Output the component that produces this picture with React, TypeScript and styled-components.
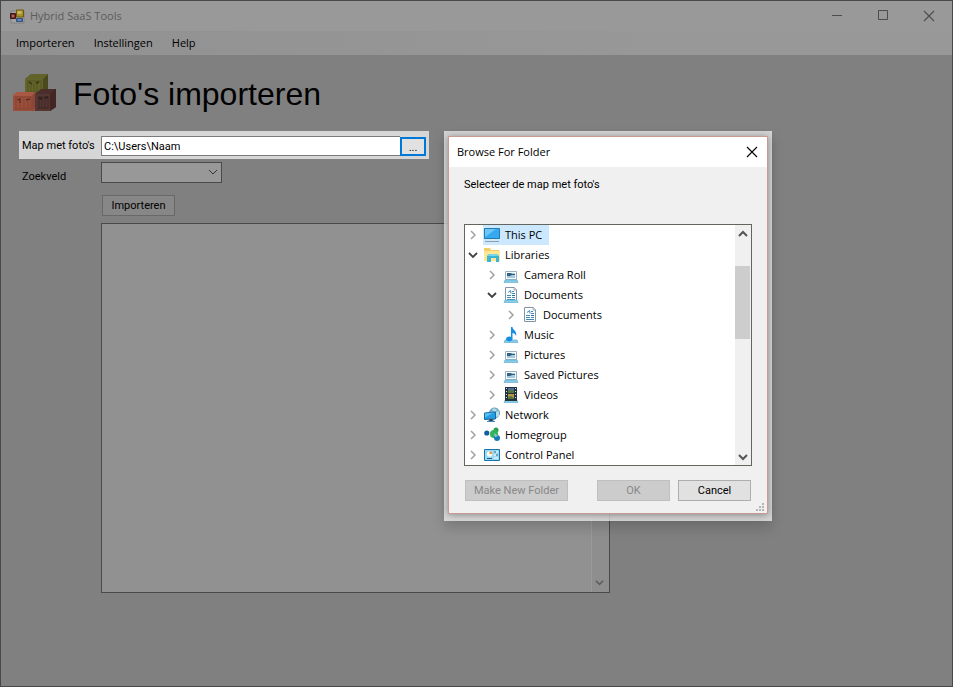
import React from 'react';
import styled, { createGlobalStyle } from 'styled-components';

const UI = '"Open Sans", "Noto Sans", sans-serif';
const CLASSIC = '"Liberation Sans", Arial, sans-serif';
const DIALOG = 'Roboto, "Liberation Sans", sans-serif';

const GlobalStyle = createGlobalStyle`
  *, *::before, *::after { box-sizing: border-box; }
  html, body { margin: 0; padding: 0; background: #808080; }
  body { font-family: ${UI}; font-size: 11px; color: #000; }
  button, input, select, textarea { font: inherit; color: inherit; margin: 0; }
`;

const AppWindow = styled.div`
  position: relative;
  display: flex;
  flex-direction: column;
  min-height: 100vh;
  border: 1px solid #484848;
  background: #808080;
`;

const TitleBar = styled.header`
  display: flex;
  align-items: center;
  height: 30px;
  padding-left: 9px;
  background: #999;
`;

const WindowTitle = styled.span`
  flex: 1;
  padding-left: 5px;
  line-height: 16px;
  color: #5c5c5c;
`;

const CaptionButton = styled.button`
  display: flex;
  align-items: center;
  justify-content: center;
  width: 46px;
  height: 30px;
  padding: 0;
  border: 0;
  background: transparent;
  color: #4c4c4c;
`;

const MenuBar = styled.nav`
  display: flex;
  height: 24px;
  padding-left: 10px;
  gap: 9px;
  background: linear-gradient(90deg, #919191, #989898 70%);
`;

const MenuButton = styled.button`
  padding: 0 5px;
  border: 0;
  background: transparent;
  line-height: 22px;
`;

const Content = styled.main`
  flex: 1;
  padding: 16px 18px 0;
`;

const Heading = styled.div`
  display: flex;
  align-items: center;
  gap: 15px;
  height: 46px;
  margin-left: -7px;
`;

const PageTitle = styled.h1`
  margin: 0;
  font: 400 32px/40px ${CLASSIC};
`;

const Form = styled.form`
  display: flex;
  flex-direction: column;
  max-width: 591px;
  margin-top: 14px;
  font-family: ${DIALOG};
`;

const FolderRow = styled.div`
  display: flex;
  align-items: center;
  width: 410px;
  max-width: 100%;
  height: 28px;
  padding: 2px 3px 0;
  background: #d6d6d6;
`;

const FieldRow = styled.div`
  display: flex;
  align-items: center;
  height: 22px;
  margin-top: 2px;
  padding-left: 3px;
`;

const Label = styled.label<{ $low?: boolean }>`
  flex: 0 0 79px;
  padding-top: ${(p) => (p.$low ? '10px' : '0')};
  line-height: 16px;
`;

const PathInput = styled.input`
  flex: 1;
  min-width: 0;
  height: 20px;
  padding: 0 2px;
  border: 1px solid #7a7a7a;
  border-right: 0;
  border-radius: 0;
  background: #fff;
  outline: 0;
`;

const BrowseButton = styled.button`
  width: 26px;
  height: 19px;
  padding: 2px 0 0;
  border: 2px solid #0078d7;
  background: #e1e1e1;
  line-height: 13px;
`;

const SelectBox = styled.div`
  display: grid;
  width: 121px;
  align-items: center;
  > * { grid-area: 1 / 1; }
  > svg { justify-self: end; margin-right: 4px; pointer-events: none; }
`;

const FieldSelect = styled.select`
  width: 100%;
  height: 21px;
  border: 1px solid #4a4a4a;
  border-radius: 0;
  background: #989898;
  appearance: none;
`;

const ImportButton = styled.button`
  width: 73px;
  height: 21px;
  margin: 12px 0 0 83px;
  padding: 0;
  border: 1px solid #686868;
  background: #878787;
`;

const LogPanel = styled.div`
  display: flex;
  height: 370px;
  margin: 7px 0 0 82px;
  border: 1px solid #4a4a4a;
  background: #919191;
`;

const LogText = styled.textarea`
  flex: 1;
  border: 0;
  padding: 2px;
  resize: none;
  overflow: hidden;
  background: transparent;
  outline: 0;
`;

const LogScroll = styled.div`
  display: flex;
  flex-direction: column;
  justify-content: flex-end;
  align-items: center;
  width: 18px;
  padding: 0 2px 5px 0;
  border-left: 1px solid #9b9b9b;
  background: #8e8e8e;
`;

const DialogHalo = styled.div`
  position: absolute;
  left: 443px;
  top: 130px;
  width: 328px;
  padding: 5px 4px 7px;
  background: rgba(235, 235, 235, 0.78);
  box-shadow: 0 7px 12px rgba(0, 0, 0, 0.16);
`;

const DialogBox = styled.section`
  border: 1px solid #c99a90;
  background: #f0f0f0;
  box-shadow: 0 1px 7px rgba(0, 0, 0, 0.36);
`;

const DialogTitleBar = styled.header`
  display: flex;
  align-items: center;
  justify-content: space-between;
  height: 30px;
  padding-left: 8px;
  background: #fff;
`;

const DialogTitle = styled.h2`
  margin: 0;
  font: 400 11px/16px ${UI};
`;

const CloseButton = styled.button`
  display: flex;
  align-items: center;
  justify-content: center;
  width: 31px;
  height: 30px;
  padding: 0;
  border: 0;
  background: transparent;
`;

const DialogBody = styled.div`
  padding: 10px 15px 0;
`;

const Prompt = styled.p`
  margin: 0;
  padding-bottom: 31px;
  font: 11px/16px ${DIALOG};
`;

const TreePanel = styled.div`
  display: flex;
  height: 242px;
  border: 1px solid #62665f;
  background: #fff;
`;

const Tree = styled.ul`
  flex: 1;
  margin: 0;
  padding: 0;
  list-style: none;
`;

const TreeRow = styled.li<{ $depth: number }>`
  display: flex;
  align-items: center;
  height: 20px;
  padding-left: ${(p) => p.$depth * 19 + 1}px;
`;

const Toggle = styled.button`
  display: flex;
  align-items: center;
  justify-content: center;
  width: 14px;
  height: 20px;
  padding: 0;
  border: 0;
  background: transparent;
`;

const NodeLabel = styled.span<{ $selected?: boolean }>`
  display: flex;
  align-items: center;
  gap: 5px;
  height: 20px;
  margin-left: 3px;
  padding: 0 7px 0 1px;
  line-height: 18px;
  background: ${(p) => (p.$selected ? '#cce8ff' : 'transparent')};
`;

const Scrollbar = styled.div`
  display: flex;
  flex-direction: column;
  width: 16px;
  background: #f0f0f0;
`;

const ScrollArrow = styled.button`
  display: flex;
  align-items: center;
  justify-content: center;
  height: 17px;
  padding: 0;
  border: 0;
  background: transparent;
`;

const ScrollTrack = styled.div`
  flex: 1;
  padding-top: 24px;
`;

const ScrollThumb = styled.div`
  width: 15px;
  height: 73px;
  background: #cdcdcd;
`;

const DialogFooter = styled.footer`
  display: flex;
  gap: 8px;
  margin: 14px 1px 0;
`;

const DialogButton = styled.button<{ $wide?: boolean }>`
  width: ${(p) => (p.$wide ? '103px' : '73px')};
  height: 21px;
  margin-right: ${(p) => (p.$wide ? 'auto' : '0')};
  padding: 0;
  border: 1px solid #adadad;
  background: #e1e1e1;
  font: 11px/18px ${DIALOG};
  &:disabled { border-color: #bfbfbf; background: #ccc; color: #888; }
`;

const GripRow = styled.div`
  display: flex;
  justify-content: flex-end;
  height: 12px;
  padding: 2px 2px 0 0;
`;

const Chevron = ({ dir, color = '#555', size = 10, weight = 2 }: {
  dir: 'up' | 'down' | 'right'; color?: string; size?: number; weight?: number;
}) => {
  const d = { up: 'M1 7l4-4 4 4', down: 'M1 3l4 4 4-4', right: 'M3 1l4 4-4 4' }[dir];
  return (
    <svg width={size} height={size} viewBox="0 0 10 10" fill="none" stroke={color} strokeWidth={weight} aria-hidden="true">
      <path d={d} />
    </svg>
  );
};

const Cross = ({ size = 12 }: { size?: number }) => (
  <svg width={size} height={size} viewBox="0 0 12 12" fill="none" stroke="currentColor" strokeWidth="1.1" aria-hidden="true">
    <path d="M1 1l10 10M11 1L1 11" />
  </svg>
);

const AppIcon = () => (
  <svg width="15" height="15" viewBox="0 0 15 15" aria-hidden="true">
    <path d="M1 2h13v12H1z" fill="#a3a3a3" stroke="#777" strokeWidth=".7" />
    <path d="M.5 4.500h5v5h-5z" fill="#7d2a22" stroke="#3b1715" />
    <path d="M2 6h2v2H2z" fill="#b76a60" />
    <path d="M6.500 1h7v7h-7z" fill="#a98f28" stroke="#6c5a12" />
    <path d="M7.500 2h4v3h-4z" fill="#c8b860" />
    <path d="M6.500 9.500h6v3h-6z" fill="#4870ad" stroke="#35507e" />
    <path d="M8 10.500h3v1H8z" fill="#7fa0cd" />
  </svg>
);

const CratesIcon = () => (
  <svg width="46" height="42" viewBox="0 0 46 42" aria-hidden="true">
    <path d="M13 6l6-5h17v15l-5 4H13z" fill="#5a5a1e" />
    <path d="M31 6l5-5v15l-5 5z" fill="#484a1d" />
    <path d="M13 6l6-5h17l-5 5z" fill="#62632a" />
    <path d="M13 6h18v15H13z" fill="#64642a" />
    <path d="M15 8h14M15 19h14M16 8v11M19 10v8M22 10v8M25 10v8M29 7v13" stroke="#53541f" />
    <path d="M17 9l3 2M24 10l3-1" stroke="#2f3217" strokeWidth="1.5" />
    <path d="M23 21l6-5h15v18l-6 4H23z" fill="#492e2b" />
    <path d="M38 21l6-5v18l-6 4z" fill="#432624" />
    <path d="M23 21h15v17H23z" fill="#533632" />
    <path d="M26 24h10M26 35h10M27 24v12M30 24v12M33 24v12M36 23v13" stroke="#402725" />
    <path d="M27 25l3 1M33 25l3-1" stroke="#2a1c1b" strokeWidth="1.5" />
    <path d="M1 22l5-3h16l1 3v16H1z" fill="#9b4e3c" />
    <path d="M1 22l5-3h17l-3 4H1z" fill="#a85843" />
    <path d="M20 23l3-4v15l-3 4z" fill="#8d4537" />
    <path d="M3 24h16M3 36h16M4 24v12M8 26v10M12 26v10M16 26v10M19 23v14" stroke="#87432f" />
    <path d="M5 27l3-1v4M14 27l4-1" fill="none" stroke="#5b2d23" strokeWidth="1.3" />
  </svg>
);

type IconKind = 'pc' | 'libraries' | 'picture' | 'document' | 'plainDocument' | 'music' | 'video' | 'network' | 'homegroup' | 'control';

const Tray = () => <path d="M2 13h12l1 2.500H1z" fill="#85cdea" stroke="#5aa8cb" strokeWidth=".6" />;

const Page = () => (
  <>
    <path d="M2.500 .5h9l2 2v12h-11z" fill="#fbfdff" stroke="#8297a3" />
    <path d="M11 0v3h3" fill="#dce5ea" stroke="#8297a3" strokeWidth=".7" />
    <path d="M5 5.500l2.500-2 .5 3M9 4.500h2M9 6.500h3M4 8.500h4M4 10.500h4M4 12.500h8M9 10.500h3" fill="none" stroke="#4288b3" />
    <path d="M9 8h3v1H9z" fill="#2f6c93" />
  </>
);

const NodeIcon = ({ kind }: { kind: IconKind }) => (
  <svg width="16" height="16" viewBox="0 0 16 16" aria-hidden="true">
    {kind === 'pc' && (
      <>
        <path d="M.5 1.500h15v10H.5z" fill="#35aaf0" stroke="#257aa9" />
        <path d="M1 2h11L1 10z" fill="#6cc8fb" />
        <path d="M6 12h4v1.500H6z" fill="#dbe9f2" />
        <path d="M1 14.500h14" stroke="#8b9faf" />
      </>
    )}
    {kind === 'libraries' && (
      <>
        <path d="M0 1h6l1 2h8v11H0z" fill="#f3ce65" />
        <path d="M0 4h16v10H0z" fill="#ffe694" />
        <path d="M3 15V9l2-2h8l2 2v6h-3v-4H7v4z" fill="#37b6d6" />
        <path d="M3 9l2-2h8l2 2z" fill="#76d7e8" />
      </>
    )}
    {kind === 'picture' && (
      <>
        <path d="M2.500 4.500h11v8h-11z" fill="#f6fbfe" stroke="#9bb1bd" />
        <path d="M4 6h8v5H4z" fill="#a3cbe2" />
        <path d="M4 6h4l1 1h3v1H9l-2 1H4z" fill="#34617f" />
        <Tray />
      </>
    )}
    {kind === 'document' && <><Page /><Tray /></>}
    {kind === 'plainDocument' && <Page />}
    {kind === 'music' && (
      <>
        <Tray />
        <path d="M8 0h1.500c0 3 5 4 3.500 9-.5-2-2-3-3.500-3v6.500C9 15 3 15 3 12c0-2 3-3 5-2z" fill="#168fe3" />
      </>
    )}
    {kind === 'video' && (
      <>
        <Tray />
        <path d="M2 0h12v14H2z" fill="#27333c" />
        <path d="M5 1h6v5H5z" fill="#466faa" />
        <path d="M5 7h6v5H5z" fill="#b39a4a" />
        <path d="M5 4l3-2 3 2v2H5zM5 10l3-1 3 2v1H5z" fill="#59733d" />
        <path d="M3.500 1v12M12.500 1v12" stroke="#dce2e4" strokeDasharray="1 2" />
      </>
    )}
    {kind === 'network' && (
      <>
        <circle cx="10.500" cy="6" r="5" fill="#78b2d2" stroke="#5c96b8" />
        <path d="M8 3l2-2 3 2-2 2zM12 5l3-1v5l-3 1z" fill="#b5dbe5" />
        <path d="M.5 6l11-1v7l-11 .5z" fill="#229ce3" stroke="#1769a1" />
        <path d="M1 6.500l9-1-9 5z" fill="#58bff1" />
        <path d="M5 12h4v2H5zM3 14.500h8" stroke="#4888ac" />
      </>
    )}
    {kind === 'homegroup' && (
      <>
        <circle cx="2.800" cy="6" r="2.600" fill="#135da0" />
        <circle cx="12" cy="3" r="2.500" fill="#27a252" />
        <circle cx="10" cy="7" r="4" fill="#32b35b" />
        <circle cx="13" cy="11" r="3" fill="#177bba" />
        <path d="M10 6l4 3-3 1z" fill="#9acbd0" />
      </>
    )}
    {kind === 'control' && (
      <>
        <path d="M.5 2.500h15v11H.5z" fill="#9bd8f6" stroke="#1674ad" />
        <circle cx="5.500" cy="7" r="2.700" fill="#f8fcff" />
        <path d="M5.500 7V4.300A2.700 2.700 0 0 1 8.200 7z" fill="#e69b38" />
        <path d="M10 5h4M10 8h4M10 11h4" stroke="#fff" />
        <path d="M10 5h2M12 8h2M3 11.500h5" stroke="#155b89" />
      </>
    )}
  </svg>
);

const nodes: { label: string; depth: number; icon: IconKind; open?: boolean; selected?: boolean }[] = [
  { label: 'This PC', depth: 0, icon: 'pc', selected: true },
  { label: 'Libraries', depth: 0, icon: 'libraries', open: true },
  { label: 'Camera Roll', depth: 1, icon: 'picture' },
  { label: 'Documents', depth: 1, icon: 'document', open: true },
  { label: 'Documents', depth: 2, icon: 'plainDocument' },
  { label: 'Music', depth: 1, icon: 'music' },
  { label: 'Pictures', depth: 1, icon: 'picture' },
  { label: 'Saved Pictures', depth: 1, icon: 'picture' },
  { label: 'Videos', depth: 1, icon: 'video' },
  { label: 'Network', depth: 0, icon: 'network' },
  { label: 'Homegroup', depth: 0, icon: 'homegroup' },
  { label: 'Control Panel', depth: 0, icon: 'control' },
];

const BrowseDialog = () => (
  <DialogHalo>
    <DialogBox role="dialog" aria-labelledby="browse-title">
      <DialogTitleBar>
        <DialogTitle id="browse-title">Browse For Folder</DialogTitle>
        <CloseButton aria-label="Close"><Cross /></CloseButton>
      </DialogTitleBar>
      <DialogBody>
        <Prompt>Selecteer de map met foto's</Prompt>
        <TreePanel>
          <Tree role="tree">
            {nodes.map((n, i) => (
              <TreeRow key={i} $depth={n.depth} role="treeitem" aria-level={n.depth + 1} aria-expanded={!!n.open} aria-selected={!!n.selected}>
                <Toggle aria-label={`Toggle ${n.label}`}>
                  <Chevron dir={n.open ? 'down' : 'right'} color={n.open ? '#404040' : '#a2a2a2'} weight={n.open ? 1.8 : 1.5} />
                </Toggle>
                <NodeLabel $selected={n.selected}>
                  <NodeIcon kind={n.icon} />
                  {n.label}
                </NodeLabel>
              </TreeRow>
            ))}
          </Tree>
          <Scrollbar>
            <ScrollArrow aria-label="Scroll up"><Chevron dir="up" /></ScrollArrow>
            <ScrollTrack><ScrollThumb /></ScrollTrack>
            <ScrollArrow aria-label="Scroll down"><Chevron dir="down" /></ScrollArrow>
          </Scrollbar>
        </TreePanel>
        <DialogFooter>
          <DialogButton $wide disabled>Make New Folder</DialogButton>
          <DialogButton disabled>OK</DialogButton>
          <DialogButton>Cancel</DialogButton>
        </DialogFooter>
      </DialogBody>
      <GripRow>
        <svg width="9" height="9" viewBox="0 0 9 9" fill="#b5b5b5" aria-hidden="true">
          <path d="M6 0h2v2H6zM3 3h2v2H3zM6 3h2v2H6zM0 6h2v2H0zM3 6h2v2H3zM6 6h2v2H6z" />
        </svg>
      </GripRow>
    </DialogBox>
  </DialogHalo>
);

export default function App() {
  return (
    <AppWindow>
      <GlobalStyle />
      <TitleBar>
        <AppIcon />
        <WindowTitle>Hybrid SaaS Tools</WindowTitle>
        <CaptionButton aria-label="Minimize">
          <svg width="12" height="12" viewBox="0 0 12 12" stroke="currentColor" aria-hidden="true"><path d="M1 5.500h10" /></svg>
        </CaptionButton>
        <CaptionButton aria-label="Maximize">
          <svg width="12" height="12" viewBox="0 0 12 12" fill="none" stroke="currentColor" aria-hidden="true"><path d="M1.500 .5h9v9h-9z" /></svg>
        </CaptionButton>
        <CaptionButton aria-label="Close"><Cross /></CaptionButton>
      </TitleBar>
      <MenuBar>
        <MenuButton>Importeren</MenuButton>
        <MenuButton>Instellingen</MenuButton>
        <MenuButton>Help</MenuButton>
      </MenuBar>
      <Content>
        <Heading>
          <CratesIcon />
          <PageTitle>Foto's importeren</PageTitle>
        </Heading>
        <Form onSubmit={(e) => e.preventDefault()}>
          <FolderRow>
            <Label htmlFor="folder">Map met foto's</Label>
            <PathInput id="folder" type="text" defaultValue="C:\Users\Naam" />
            <BrowseButton type="button" aria-label="Browse">...</BrowseButton>
          </FolderRow>
          <FieldRow>
            <Label htmlFor="field" $low>Zoekveld</Label>
            <SelectBox>
              <FieldSelect id="field" defaultValue=""><option value="" /></FieldSelect>
              <Chevron dir="down" color="#333" weight={1} />
            </SelectBox>
          </FieldRow>
          <ImportButton type="submit">Importeren</ImportButton>
          <LogPanel>
            <LogText aria-label="Log" readOnly />
            <LogScroll><Chevron dir="down" color="#5e5e5e" weight={1.8} size={9} /></LogScroll>
          </LogPanel>
        </Form>
      </Content>
      <BrowseDialog />
    </AppWindow>
  );
}
